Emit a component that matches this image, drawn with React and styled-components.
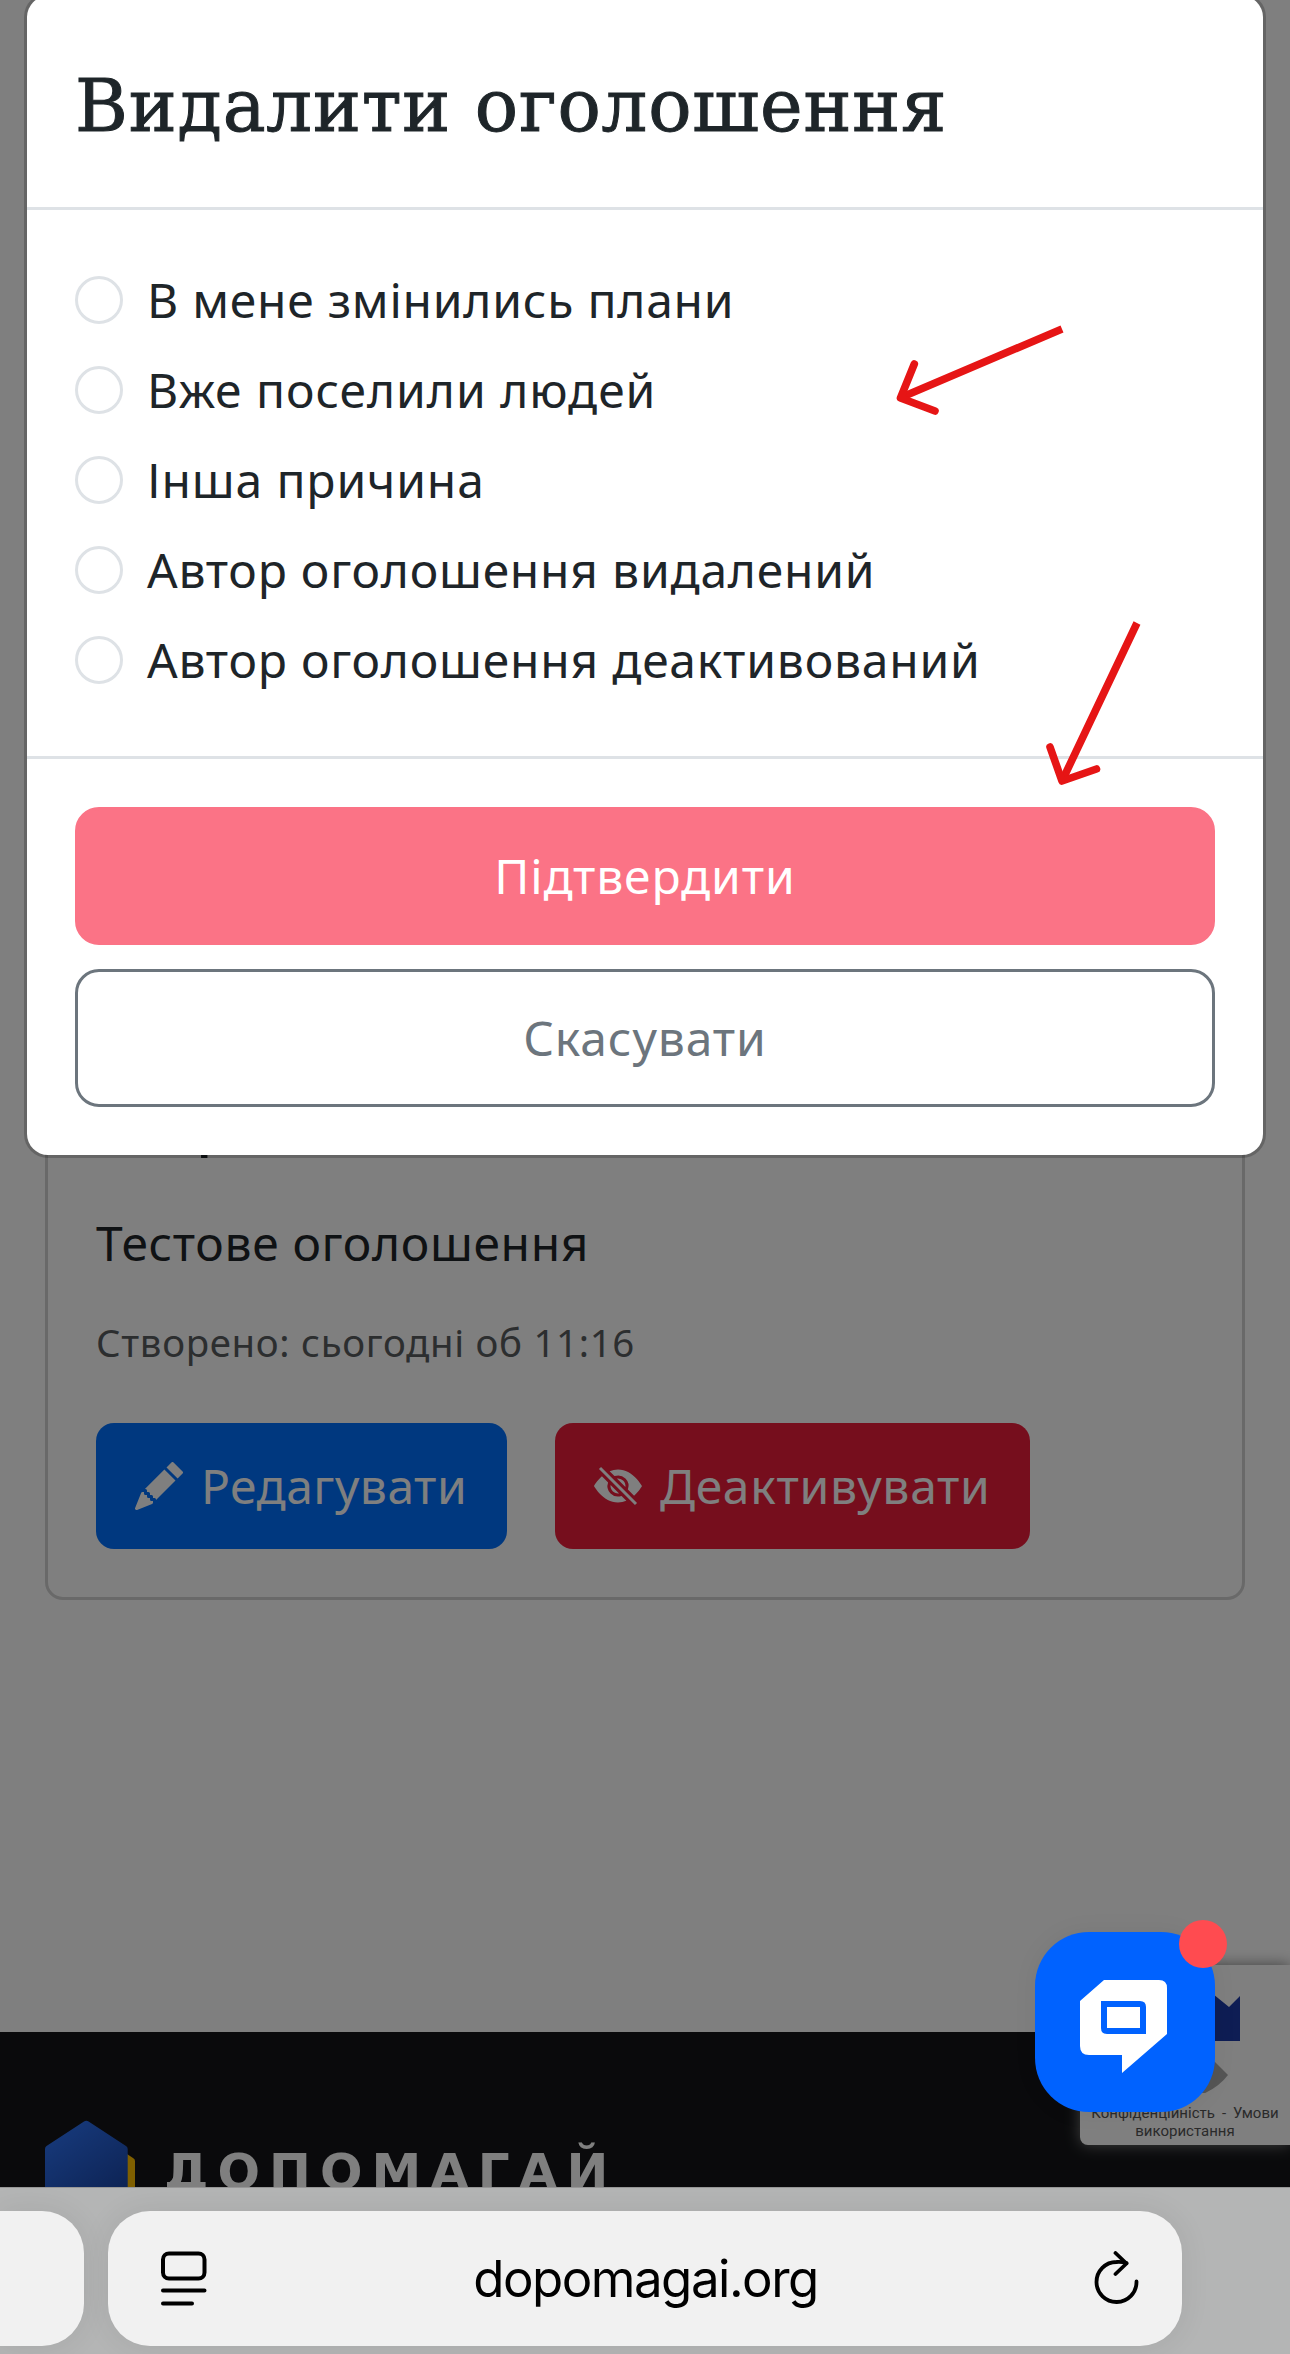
import React from 'react';
//Styling
import styled, { createGlobalStyle } from 'styled-components';
//Icons
import { BsPencilFill, BsEyeSlashFill } from 'react-icons/bs';

//Data
const reasons = [
  { id: 1, label: 'В мене змінились плани', spacing: 0.75 },
  { id: 2, label: 'Вже поселили людей', spacing: 0.95 },
  { id: 3, label: 'Інша причина', spacing: 0.85 },
  { id: 4, label: 'Автор оголошення видалений', spacing: 0.77 },
  { id: 5, label: 'Автор оголошення деактивований', spacing: 0.78 },
];

const HouseLogo = () => (
  <svg width='91' height='100' viewBox='0 0 91 100'>
    <defs>
      <linearGradient id='house' x1='0' y1='0' x2='0.6' y2='1'>
        <stop offset='0' stopColor='#3078ff' />
        <stop offset='1' stopColor='#1a44a4' />
      </linearGradient>
    </defs>
    <path d='M82 34l6 4q2 1 2 3v59h-8z' fill='#ffbe00' />
    <path
      d='M39 1.5q2.300-1.600 4.600 0L81 26q1.700 1.200 1.700 3v71H0V29q0-2 1.500-3z'
      fill='url(#house)'
    />
  </svg>
);

const ChatLogo = () => (
  <svg width='87' height='93' viewBox='0 0 87 93'>
    <path
      fill='#fff'
      fillRule='evenodd'
      d='M24 0H79q8 0 8 8V54L42 93V75H9q-9 0-9-9V21zM21 21V48q0 6 6 6H66V27q0-6-6-6zM27 27H60V48H27z'
    />
  </svg>
);

const RecaptchaLogo = () => (
  <svg width='100' height='110' viewBox='0 0 100 110'>
    <path d='M50 11H68L84 24L95 13V58H50z' fill='#1c3aa9' />
    <path d='M62 71L83 92Q74 104 58 111H40z' fill='#ababab' />
  </svg>
);

const PageMenuIcon = () => (
  <svg width='46' height='56' viewBox='0 0 46 56' fill='none' stroke='#000'>
    <rect x='2' y='2.500' width='41.500' height='25' rx='6' strokeWidth='4' />
    <path d='M2 39.500H43.500M2 52.500H31' strokeWidth='4' strokeLinecap='round' />
  </svg>
);

const ReloadIcon = () => (
  <svg width='46' height='56' viewBox='0 0 46 56' fill='none' stroke='#000'>
    <g strokeWidth='3.800' strokeLinecap='round' strokeLinejoin='round'>
      <path d='M42.500 30.500A20 20 0 1 1 22.500 11Q27.500 10.600 32.500 12' />
      <path d='M21.500 2L32.500 12.500L21.500 23' />
    </g>
  </svg>
);

const App = () => {
  return (
    <>
      <GlobalStyle />
      <Screen>
        <Page>
          <Card>
            <Category>р</Category>
            <AdTitle>Тестове оголошення</AdTitle>
            <Created>Створено: сьогодні об 11:16</Created>
            <Actions>
              <ActionButton $color='#0070ff' $width={411}>
                <BsPencilFill size={48} />
                <Label $spacing={0.5}>Редагувати</Label>
              </ActionButton>
              <ActionButton $color='#ec1c3a' $width={475}>
                <BsEyeSlashFill size={48} />
                <Label $spacing={0.7}>Деактивувати</Label>
              </ActionButton>
            </Actions>
          </Card>
          <Footer>
            <HouseLogo />
            <Wordmark>ДОПОМАГАЙ</Wordmark>
          </Footer>
          <Recaptcha>
            <RecaptchaLogo />
            <Policy>
              <span>Конфіденційність</span>
              <span>-</span>
              <span>Умови</span>
            </Policy>
            <Policy>використання</Policy>
          </Recaptcha>

          <Backdrop>
            <Modal>
              <ModalHeader>
                <h1>Видалити оголошення</h1>
              </ModalHeader>
              <ModalBody>
                {reasons.map(reason => (
                  <Reason key={reason.id}>
                    <Radio type='radio' name='reason' />
                    <Label $spacing={reason.spacing}>{reason.label}</Label>
                  </Reason>
                ))}
              </ModalBody>
              <ModalFooter>
                <ModalButton $filled>Підтвердити</ModalButton>
                <ModalButton>Скасувати</ModalButton>
              </ModalFooter>
            </Modal>
          </Backdrop>

          <Chat>
            <ChatLogo />
            <Unread />
          </Chat>

          <Arrows width='300' height='490' viewBox='880 310 300 490'>
            <path d='M1062 329L901 397.500M1137 623L1062.500 780' />
            <path
              d='M914.300 364L900.500 398L935 411M1050 747L1062 781L1096.500 769'
              strokeLinecap='round'
              strokeLinejoin='round'
            />
          </Arrows>
        </Page>

        <BrowserBar>
          <PreviousTab />
          <AddressBar>
            <PageMenuIcon />
            <Address>dopomagai.org</Address>
            <ReloadIcon />
          </AddressBar>
        </BrowserBar>
      </Screen>
    </>
  );
};

const GlobalStyle = createGlobalStyle`
  * {
    box-sizing: border-box;
    margin: 0;
    padding: 0;
  }
  body {
    background: #808080;
    font-family: 'Noto Sans', sans-serif;
    font-size: 48px;
    line-height: 72px;
    color: #1e2529;
  }
  button {
    font: inherit;
  }
  svg {
    display: block;
    flex: none;
  }
`;

const Screen = styled.div`
  width: 1290px;
  height: 2354px;
  display: flex;
  flex-direction: column;
  overflow: hidden;
`;

const Page = styled.main`
  position: relative;
  flex: none;
  height: 2187px;
  display: flex;
  flex-direction: column;
  background: white;
  overflow: hidden;
`;

const Card = styled.section`
  margin: 1034px 45px 0;
  padding: 48px;
  border: 3px solid rgba(0, 0, 0, 0.175);
  border-radius: 18px;
  white-space: nowrap;
`;

const Category = styled.h2`
  font-size: 60px;
  font-weight: 500;
  line-height: 72px;
  padding-left: 100px;
  margin-bottom: 50px;
`;

const AdTitle = styled.p`
  margin-bottom: 33px;
  letter-spacing: 0.65px;
`;

const Created = styled.p`
  font-size: 38.4px;
  line-height: 60px;
  color: #595c5f;
  margin-bottom: 51px;
  letter-spacing: 0.7px;
`;

const Actions = styled.div`
  display: flex;
  gap: 48px;
`;

const Label = styled.span`
  white-space: nowrap;
  letter-spacing: ${({ $spacing }) => $spacing}px;
`;

const ActionButton = styled.button`
  display: flex;
  align-items: center;
  gap: 18px;
  width: ${({ $width }) => $width}px;
  height: 126px;
  padding-left: 39px;
  border: none;
  border-radius: 18px;
  color: white;
  background: ${({ $color }) => $color};
`;

const Footer = styled.footer`
  display: flex;
  align-items: flex-start;
  gap: 28px;
  flex: none;
  height: 400px;
  margin-top: 432px;
  padding: 88px 44px 0 45px;
  background: #141518;
`;

const Wordmark = styled.span`
  font-family: 'DejaVu Sans', sans-serif;
  font-size: 50px;
  font-weight: 700;
  line-height: 60px;
  letter-spacing: 9px;
  margin-top: 22px;
  color: white;
`;

const Recaptcha = styled.aside`
  position: absolute;
  right: 0;
  top: 1965px;
  width: 210px;
  height: 180px;
  padding: 18px 0 0 24px;
  background: white;
  border-radius: 8px 0 0 8px;
  box-shadow: gray 0 0 15px;
  svg {
    margin-left: 41px;
    margin-bottom: 11px;
  }
`;

const Policy = styled.p`
  display: flex;
  justify-content: center;
  gap: 7px;
  margin-left: -24px;
  font-family: Roboto, sans-serif;
  font-size: 15px;
  line-height: 18px;
  color: #555;
`;

const Backdrop = styled.div`
  position: absolute;
  inset: 0;
  padding: 0 24px;
  background: rgba(0, 0, 0, 0.5);
`;

const Modal = styled.div`
  margin-top: -7px;
  border: 3px solid rgba(0, 0, 0, 0.2);
  border-radius: 24px;
  background: white;
  background-clip: padding-box;
`;

const ModalHeader = styled.header`
  padding: 67px 48px 58px;
  border-bottom: 3px solid #dee2e6;
  h1 {
    font-family: 'DejaVu Serif', serif;
    font-size: 72px;
    font-weight: 400;
    line-height: 86px;
    letter-spacing: 0.8px;
    -webkit-text-stroke: 1px #1e2529;
    white-space: nowrap;
  }
`;

const ModalBody = styled.div`
  padding: 48px;
`;

const Reason = styled.label`
  display: flex;
  align-items: center;
  gap: 24px;
  height: 90px;
  padding-bottom: 6px;
`;

const Radio = styled.input`
  appearance: none;
  width: 48px;
  height: 48px;
  border: 3px solid #dee2e6;
  border-radius: 50%;
`;

const ModalFooter = styled.footer`
  display: flex;
  flex-direction: column;
  gap: 24px;
  padding: 48px;
  border-top: 3px solid #dee2e6;
`;

const ModalButton = styled.button`
  height: 138px;
  border: 3px solid ${({ $filled }) => ($filled ? '#fb7386' : '#6c757d')};
  border-radius: 24px;
  color: ${({ $filled }) => ($filled ? 'white' : '#6c757d')};
  background: ${({ $filled }) => ($filled ? '#fb7386' : 'white')};
  letter-spacing: 0.9px;
`;

const Chat = styled.div`
  position: absolute;
  left: 1035px;
  top: 1932px;
  width: 180px;
  height: 180px;
  padding: 48px 45px;
  border-radius: 54px;
  background: #0062ff;
  box-shadow: 0 0 24px rgba(0, 0, 0, 0.06);
`;

const Unread = styled.span`
  position: absolute;
  top: -12px;
  right: -12px;
  width: 48px;
  height: 48px;
  border-radius: 50%;
  background: #ff4b50;
`;

const Arrows = styled.svg`
  position: absolute;
  left: 880px;
  top: 310px;
  fill: none;
  stroke: #e61515;
  stroke-width: 7.6;
`;

const BrowserBar = styled.nav`
  display: flex;
  gap: 24px;
  height: 167px;
  padding: 23px 108px 8px 0;
  border-top: 1px solid #979797;
  background: #b4b5b5;
`;

const PreviousTab = styled.div`
  flex: none;
  width: 84px;
  border-radius: 0 42px 42px 0;
  background: #f1f1f1;
  box-shadow: 0 0 30px rgba(0, 0, 0, 0.08);
`;

const AddressBar = styled.div`
  flex: 1;
  display: flex;
  align-items: center;
  justify-content: space-between;
  padding: 0 42px 0 53px;
  border-radius: 42px;
  background: #f1f1f1;
  box-shadow: 0 0 30px rgba(0, 0, 0, 0.08);
`;

const Address = styled.span`
  font-family: Inter, sans-serif;
  font-size: 51px;
  line-height: 60px;
  letter-spacing: -1.5px;
  margin-right: 10px;
  color: black;
`;

export default App;
